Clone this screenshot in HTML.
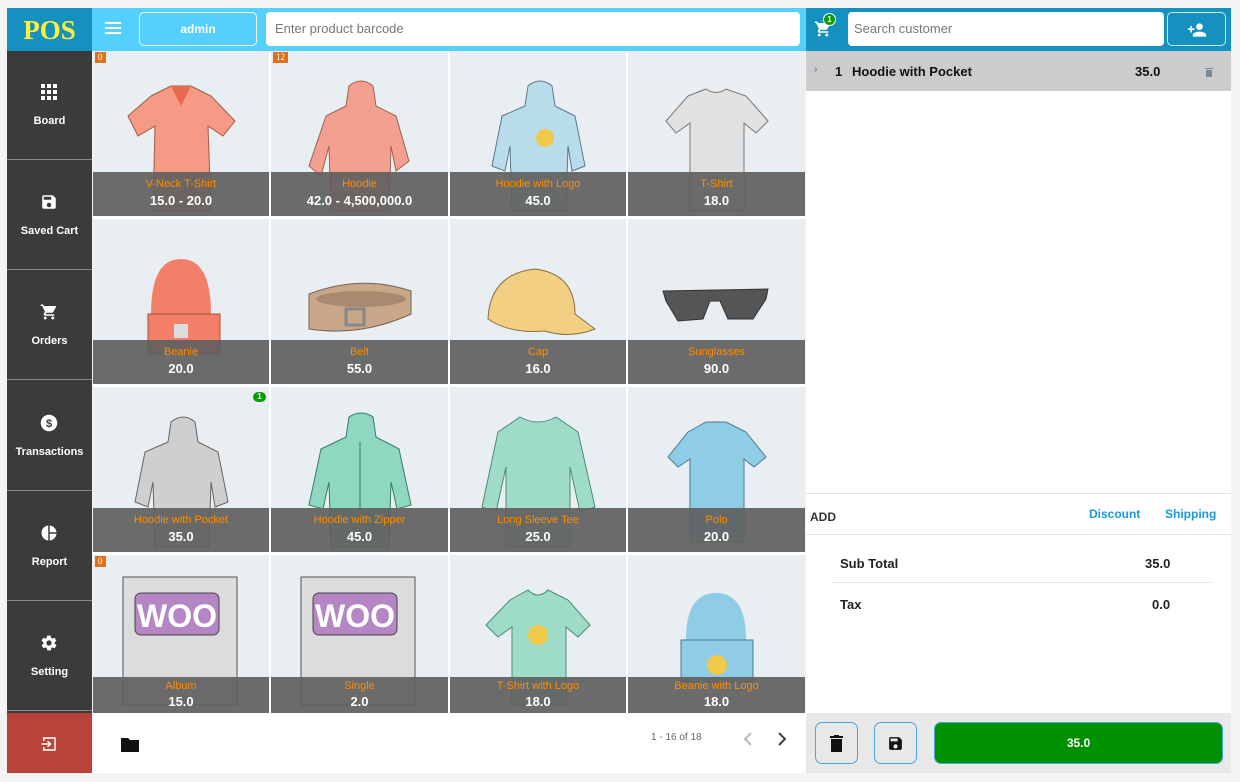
<!DOCTYPE html>
<html><head><meta charset="utf-8"><style>
*{box-sizing:border-box;margin:0;padding:0}
body{width:1240px;height:782px;background:#f4f4f4;font-family:"Liberation Sans",Arial,sans-serif;position:relative;overflow:hidden}
.abs{position:absolute}
#logo{left:7px;top:8px;width:85px;height:43px;background:#1591c0;color:#ffee3a;font-family:"Liberation Serif",serif;font-weight:bold;font-size:27px;text-align:center;line-height:45px}
#topl{left:92px;top:8px;width:714px;height:43px;background:#55cffb}
#topr{left:806px;top:8px;width:425px;height:43px;background:#1591c0}
#side{left:7px;top:51px;width:85px;height:722px;background:#3b3b3b}
.si{position:absolute;left:0;width:85px;height:109px;border-bottom:1px solid #8a8a8a;color:#fff;font-size:11px;font-weight:bold;text-align:center}
.si svg{position:absolute;left:33px;top:32px}
.si span{position:absolute;left:0;right:0;top:64px}
#grid{left:93px;top:51px;width:712px;height:662px;background:#fff}
.c{position:absolute;background:#e8eef2;overflow:hidden}
.ov{position:absolute;left:0;right:0;bottom:0;height:44px;background:rgba(95,95,95,.92);text-align:center}
.ov .n{color:#ff8c00;font-size:11px;margin-top:6px}
.ov .p{color:#fff;font-size:13px;font-weight:bold;margin-top:3px}
.r4 .ov{height:36px}
.r4 .ov .n{margin-top:3px}
.r4 .ov .p{margin-top:2px}
.c svg{position:absolute;left:0;top:0}
.bd{position:absolute;left:2px;top:1px;background:#e0701a;color:#fff;font-family:"Liberation Serif",serif;font-size:9px;padding:0 3px;height:11px;line-height:11px}
</style></head><body>
<div id="logo" class="abs">POS</div>
<div id="topl" class="abs">
 <div class="abs" style="left:13px;top:14px;width:16px;height:2px;background:#fff;box-shadow:0 5px 0 #fff,0 10px 0 #fff"></div>
 <div class="abs" style="left:47px;top:4px;width:118px;height:34px;border:1px solid #e8f7ff;border-radius:5px;color:#fff;font-weight:bold;font-size:12px;text-align:center;line-height:32px">admin</div>
 <div class="abs" style="left:174px;top:4px;width:534px;height:34px;background:#fff;border-radius:4px;color:#777;font-size:13px;line-height:34px;padding-left:9px">Enter product barcode</div>
</div>
<div id="topr" class="abs">
 <svg class="abs" style="left:8px;top:12px" width="18" height="18" viewBox="0 0 24 24"><path fill="#fff" d="M7 18c-1.1 0-2 .9-2 2s.9 2 2 2 2-.9 2-2-.9-2-2-2zM1 2v2h2l3.6 7.6-1.4 2.4C4.5 15.4 5.5 17 7 17h12v-2H7.4l1.1-2h7.5c.8 0 1.4-.4 1.7-1l3.6-6.5C21.6 4.8 21.1 4 20.3 4H5.2l-.9-2H1zm16 16c-1.1 0-2 .9-2 2s.9 2 2 2 2-.9 2-2-.9-2-2-2z"/></svg>
 <div class="abs" style="left:17px;top:5px;width:13px;height:13px;border-radius:50%;background:#0a9a0a;border:1px solid #fff;color:#fff;font-size:8px;font-weight:bold;text-align:center;line-height:11px">1</div>
 <div class="abs" style="left:42px;top:4px;width:316px;height:34px;background:#fff;border-radius:4px;color:#777;font-size:13px;line-height:34px;padding-left:6px">Search customer</div>
 <div class="abs" style="left:361px;top:4px;width:59px;height:34px;border:1px solid #cfe9f5;border-radius:5px"><svg class="abs" style="left:18px;top:7px" width="22" height="20" viewBox="0 0 24 24"><path fill="#fff" d="M15 12c2.2 0 4-1.8 4-4s-1.8-4-4-4-4 1.8-4 4 1.8 4 4 4zm-9-2V7H4v3H1v2h3v3h2v-3h3v-2H6zm9 4c-2.7 0-8 1.3-8 4v2h16v-2c0-2.7-5.3-4-8-4z"/></svg></div>
</div>
<div id="side" class="abs">
 <div class="si" style="top:0"><svg width="18" height="18" viewBox="0 0 18 18" fill="#fff"><rect x="1" y="1" width="4" height="4"/><rect x="7" y="1" width="4" height="4"/><rect x="13" y="1" width="4" height="4"/><rect x="1" y="7" width="4" height="4"/><rect x="7" y="7" width="4" height="4"/><rect x="13" y="7" width="4" height="4"/><rect x="1" y="13" width="4" height="4"/><rect x="7" y="13" width="4" height="4"/><rect x="13" y="13" width="4" height="4"/></svg><span>Board</span></div>
 <div class="si" style="top:110px"><svg width="18" height="18" viewBox="0 0 24 24"><path fill="#fff" d="M17 3H5c-1.1 0-2 .9-2 2v14c0 1.1.9 2 2 2h14c1.1 0 2-.9 2-2V7l-4-4zm-5 16c-1.7 0-3-1.3-3-3s1.3-3 3-3 3 1.3 3 3-1.3 3-3 3zm3-10H5V5h10v4z"/></svg><span>Saved Cart</span></div>
 <div class="si" style="top:220px"><svg width="18" height="18" viewBox="0 0 24 24"><path fill="#fff" d="M7 18c-1.1 0-2 .9-2 2s.9 2 2 2 2-.9 2-2-.9-2-2-2zM1 2v2h2l3.6 7.6-1.4 2.4C4.5 15.4 5.5 17 7 17h12v-2H7.4l1.1-2h7.5c.8 0 1.4-.4 1.7-1l3.6-6.5C21.6 4.8 21.1 4 20.3 4H5.2l-.9-2H1zm16 16c-1.1 0-2 .9-2 2s.9 2 2 2 2-.9 2-2-.9-2-2-2z"/></svg><span>Orders</span></div>
 <div class="si" style="top:331px"><svg width="18" height="18" viewBox="0 0 24 24"><circle cx="12" cy="12" r="11" fill="#fff"/><text x="12" y="17.5" text-anchor="middle" font-size="15" font-weight="bold" fill="#3b3b3b" font-family="Liberation Sans">$</text></svg><span>Transactions</span></div>
 <div class="si" style="top:441px"><svg width="18" height="18" viewBox="0 0 24 24"><path fill="#fff" d="M11 2v20c-5.1-.5-9-4.8-9-10s3.9-9.5 9-10zm2 0v9h9c-.5-4.7-4.3-8.5-9-9zm0 11v9c4.7-.5 8.5-4.3 9-9h-9z"/></svg><span>Report</span></div>
 <div class="si" style="top:551px"><svg width="18" height="18" viewBox="0 0 24 24"><path fill="#fff" d="M19.4 13c0-.3.1-.6.1-1s0-.7-.1-1l2.1-1.6c.2-.2.2-.4.1-.6l-2-3.5c-.1-.2-.4-.3-.6-.2l-2.5 1c-.5-.4-1.1-.7-1.7-1l-.4-2.6c0-.2-.2-.4-.5-.4h-4c-.3 0-.5.2-.5.4l-.4 2.6c-.6.3-1.200.6-1.7 1l-2.5-1c-.2-.1-.5 0-.6.2l-2 3.5c-.1.2-.1.5.1.6L4.6 11c0 .3-.1.6-.1 1s0 .7.1 1l-2.1 1.6c-.2.2-.2.4-.1.6l2 3.5c.1.2.4.3.6.2l2.5-1c.5.4 1.1.7 1.7 1l.4 2.6c0 .2.2.4.5.4h4c.3 0 .5-.2.5-.4l.4-2.6c.6-.3 1.2-.6 1.7-1l2.5 1c.2.1.5 0 .6-.2l2-3.5c.1-.2.1-.5-.1-.6L19.4 13zM12 15.5c-1.9 0-3.5-1.6-3.5-3.5s1.6-3.5 3.5-3.5 3.5 1.6 3.5 3.5-1.6 3.5-3.5 3.5z"/></svg><span>Setting</span></div>
 <div class="abs" style="left:0;top:662px;width:85px;height:60px;background:#b8433a"><svg class="abs" style="left:33px;top:22px" width="18" height="18" viewBox="0 0 24 24"><path fill="none" stroke="#fff" stroke-width="2" d="M5 8V4h15v16H5v-4M2 12h11M10 8l4 4-4 4"/></svg></div>
</div>
<div id="grid" class="abs">
 <div class="c" style="left:0;top:0;width:176px;height:165px"><svg width="176" height="165"><path d="M58 45 L78 35 L98 35 L118 45 L142 70 L130 85 L115 75 L118 160 L60 160 L62 75 L45 85 L35 65Z" fill="#f59a85" stroke="#a05a48"/><path d="M78 35 L88 55 L98 35Z" fill="#e86a50"/></svg><div class="bd">0</div><div class="ov"><div class="n">V-Neck T-Shirt</div><div class="p">15.0 - 20.0</div></div></div>
 <div class="c" style="left:178px;top:0;width:177px;height:165px"><svg width="177" height="165"><path d="M78 35 Q90 25 102 35 L105 55 L125 65 L138 110 L125 120 L120 95 L118 160 L60 160 L58 95 L50 125 L38 115 L55 65 L75 55Z" fill="#f4a090" stroke="#a06050"/></svg><div class="bd">12</div><div class="ov"><div class="n">Hoodie</div><div class="p">42.0 - 4,500,000.0</div></div></div>
 <div class="c" style="left:357px;top:0;width:176px;height:165px"><svg width="176" height="165"><path d="M78 35 Q90 25 102 35 L105 55 L125 65 L135 115 L122 120 L118 95 L116 160 L62 160 L60 95 L55 120 L42 115 L52 65 L75 55Z" fill="#b8dcea" stroke="#5a7a8a"/><circle cx="95" cy="87" r="9" fill="#f2c84a"/></svg><div class="ov"><div class="n">Hoodie with Logo</div><div class="p">45.0</div></div></div>
 <div class="c" style="left:535px;top:0;width:177px;height:165px"><svg width="177" height="165"><path d="M60 45 L78 38 Q88 45 98 38 L118 45 L140 70 L128 82 L116 72 L116 160 L62 160 L62 72 L48 82 L38 70Z" fill="#e2e2e2" stroke="#777"/></svg><div class="ov"><div class="n">T-Shirt</div><div class="p">18.0</div></div></div>
 <div class="c" style="left:0;top:168px;width:176px;height:165px"><svg width="176" height="165"><path d="M58 95 Q58 40 88 40 Q118 40 118 95 Z" fill="#f47f68"/><rect x="55" y="95" width="72" height="40" fill="#f47f68" stroke="#a05040"/><rect x="81" y="105" width="14" height="14" fill="#ddd"/></svg><div class="ov"><div class="n">Beanie</div><div class="p">20.0</div></div></div>
 <div class="c" style="left:178px;top:168px;width:177px;height:165px"><svg width="177" height="165"><path d="M38 75 Q90 55 140 72 L140 95 Q90 118 38 110Z" fill="#c9a78a" stroke="#7a6050"/><ellipse cx="90" cy="80" rx="45" ry="8" fill="#a98a70"/><rect x="75" y="90" width="18" height="16" fill="none" stroke="#888" stroke-width="3"/></svg><div class="ov"><div class="n">Belt</div><div class="p">55.0</div></div></div>
 <div class="c" style="left:357px;top:168px;width:176px;height:165px"><svg width="176" height="165"><path d="M38 100 Q40 55 85 50 Q125 55 125 95 L145 110 Q120 120 95 112 Q60 115 38 100Z" fill="#f2cf82" stroke="#8a7040"/></svg><div class="ov"><div class="n">Cap</div><div class="p">16.0</div></div></div>
 <div class="c" style="left:535px;top:168px;width:177px;height:165px"><svg width="177" height="165"><path d="M35 72 L140 70 L138 80 L125 100 L100 100 L92 82 L82 82 L75 100 L50 102 L38 82Z" fill="#555" stroke="#333"/></svg><div class="ov"><div class="n">Sunglasses</div><div class="p">90.0</div></div></div>
 <div class="c" style="left:0;top:336px;width:176px;height:165px"><svg width="176" height="165"><path d="M78 35 Q90 25 102 35 L105 55 L125 65 L135 115 L122 120 L118 95 L116 160 L62 160 L60 95 L55 120 L42 115 L52 65 L75 55Z" fill="#cfcfcf" stroke="#666"/></svg><div class="abs" style="left:160px;top:5px;width:13px;height:10px;border-radius:5px;background:#0a9a0a;color:#fff;font-size:8px;text-align:center;line-height:10px;font-weight:bold">1</div><div class="ov"><div class="n">Hoodie with Pocket</div><div class="p">35.0</div></div></div>
 <div class="c" style="left:178px;top:336px;width:177px;height:165px"><svg width="177" height="165"><path d="M78 30 Q90 22 102 30 L105 50 L128 62 L140 118 L126 122 L120 95 L118 160 L60 160 L58 95 L52 122 L38 118 L50 62 L75 50Z" fill="#8fd8c0" stroke="#3a7a68"/><line x1="89" y1="55" x2="89" y2="160" stroke="#3a7a68"/></svg><div class="ov"><div class="n">Hoodie with Zipper</div><div class="p">45.0</div></div></div>
 <div class="c" style="left:357px;top:336px;width:176px;height:165px"><svg width="176" height="165"><path d="M70 30 Q88 40 106 30 L128 45 L145 120 L130 125 L120 80 L120 160 L56 160 L56 80 L46 125 L32 120 L48 45Z" fill="#9fdcc8" stroke="#4a8a78"/></svg><div class="ov"><div class="n">Long Sleeve Tee</div><div class="p">25.0</div></div></div>
 <div class="c" style="left:535px;top:336px;width:177px;height:165px"><svg width="177" height="165"><path d="M60 45 L78 35 L98 35 L118 45 L138 70 L126 80 L116 72 L116 155 L62 155 L62 72 L50 80 L40 70Z" fill="#8fcce6" stroke="#4a7a90"/></svg><div class="ov"><div class="n">Polo</div><div class="p">20.0</div></div></div>
 <div class="c r4" style="left:0;top:504px;width:176px;height:158px"><svg width="176" height="158"><rect x="30" y="22" width="114" height="128" fill="#dcdcdc" stroke="#555"/><rect x="42" y="38" width="84" height="42" rx="6" fill="#b486c4" stroke="#444"/><text x="84" y="72" text-anchor="middle" font-size="32" font-weight="bold" fill="#fff" font-family="Liberation Sans">WOO</text></svg><div class="bd">0</div><div class="ov"><div class="n">Album</div><div class="p">15.0</div></div></div>
 <div class="c r4" style="left:178px;top:504px;width:177px;height:158px"><svg width="177" height="158"><rect x="30" y="22" width="114" height="128" fill="#dcdcdc" stroke="#555"/><rect x="42" y="38" width="84" height="42" rx="6" fill="#b486c4" stroke="#444"/><text x="84" y="72" text-anchor="middle" font-size="32" font-weight="bold" fill="#fff" font-family="Liberation Sans">WOO</text></svg><div class="ov"><div class="n">Single</div><div class="p">2.0</div></div></div>
 <div class="c r4" style="left:357px;top:504px;width:176px;height:158px"><svg width="176" height="158"><path d="M60 45 L78 35 Q88 45 98 35 L118 45 L140 70 L128 82 L116 72 L116 150 L62 150 L62 72 L48 82 L36 70Z" fill="#9fdcc8" stroke="#4a8a78"/><circle cx="88" cy="80" r="10" fill="#f2c84a"/></svg><div class="ov"><div class="n">T-Shirt with Logo</div><div class="p">18.0</div></div></div>
 <div class="c r4" style="left:535px;top:504px;width:177px;height:158px"><svg width="177" height="158"><path d="M58 85 Q58 38 88 38 Q118 38 118 85 Z" fill="#8fcce6"/><rect x="53" y="85" width="72" height="42" fill="#8fcce6" stroke="#4a7a90"/><circle cx="89" cy="110" r="10" fill="#f2c84a"/></svg><div class="ov"><div class="n">Beanie with Logo</div><div class="p">18.0</div></div></div>
</div>
<div class="abs" style="left:92px;top:713px;width:714px;height:60px;background:#fff">
 <svg class="abs" style="left:29px;top:24px" width="18" height="15" viewBox="0 0 18 15"><path d="M0 1h7l2 2h9v12H0z" fill="#111"/></svg>
 <div class="abs" style="left:559px;top:19px;font-size:10px;color:#666">1 - 16 of 18</div>
 <svg class="abs" style="left:651px;top:19px" width="10" height="14"><path d="M8 1L2 7l6 6" fill="none" stroke="#bbb" stroke-width="2"/></svg>
 <svg class="abs" style="left:685px;top:19px" width="10" height="14"><path d="M2 1l6 6-6 6" fill="none" stroke="#444" stroke-width="2"/></svg>
</div>
<div class="abs" style="left:806px;top:51px;width:425px;height:662px;background:#fff">
 <div class="abs" style="left:0;top:0;width:425px;height:40px;background:#cccccc;font-size:13px;font-weight:bold;color:#111">
  <span class="abs" style="left:8px;top:13px;color:#668;font-weight:normal;font-size:10px">›</span>
  <span class="abs" style="left:29px;top:13px">1</span>
  <span class="abs" style="left:46px;top:13px">Hoodie with Pocket</span>
  <span class="abs" style="left:329px;top:13px">35.0</span>
  <svg class="abs" style="left:399px;top:16px" width="8" height="10"><path d="M0 1h8v1H0zM1 3h6v7H1z" fill="#789"/></svg>
 </div>
 <div class="abs" style="left:0;top:442px;width:425px;height:1px;background:#e2e2e2"></div>
 <div class="abs" style="left:4px;top:459px;font-size:12px;font-weight:bold;color:#333">ADD</div>
 <div class="abs" style="left:283px;top:456px;font-size:12px;font-weight:bold;color:#1a9ad8">Discount</div>
 <div class="abs" style="left:359px;top:456px;font-size:12px;font-weight:bold;color:#1a9ad8">Shipping</div>
 <div class="abs" style="left:0;top:483px;width:425px;height:1px;background:#e2e2e2"></div>
 <div class="abs" style="left:34px;top:505px;font-size:13px;font-weight:bold;color:#222">Sub Total</div>
 <div class="abs" style="left:339px;top:505px;font-size:13px;font-weight:bold;color:#222">35.0</div>
 <div class="abs" style="left:26px;top:531px;width:380px;height:1px;background:#e6e6e6"></div>
 <div class="abs" style="left:34px;top:546px;font-size:13px;font-weight:bold;color:#222">Tax</div>
 <div class="abs" style="left:346px;top:546px;font-size:13px;font-weight:bold;color:#222">0.0</div>
</div>
<div class="abs" style="left:806px;top:713px;width:425px;height:60px;background:#e8e8e8">
 <div class="abs" style="left:9px;top:9px;width:43px;height:42px;border:1px solid #4aa8d8;border-radius:7px"><svg class="abs" style="left:14px;top:12px" width="13" height="17" viewBox="0 0 13 17"><path d="M0 1h13v2H0zM4 0h5v1H4zM1 4h11v13H1z" fill="#111"/></svg></div>
 <div class="abs" style="left:68px;top:9px;width:43px;height:42px;border:1px solid #4aa8d8;border-radius:7px"><svg class="abs" style="left:12px;top:12px" width="17" height="17" viewBox="0 0 24 24"><path fill="#111" d="M17 3H5c-1.1 0-2 .9-2 2v14c0 1.1.9 2 2 2h14c1.1 0 2-.9 2-2V7l-4-4zm-5 16c-1.7 0-3-1.3-3-3s1.3-3 3-3 3 1.3 3 3-1.3 3-3 3zm3-10H5V5h10v4z"/></svg></div>
 <div class="abs" style="left:128px;top:9px;width:289px;height:42px;background:#009100;border:1px solid #4aa8d8;border-radius:7px;color:#fff;font-weight:bold;font-size:12px;text-align:center;line-height:40px">35.0</div>
</div>
</body></html>
